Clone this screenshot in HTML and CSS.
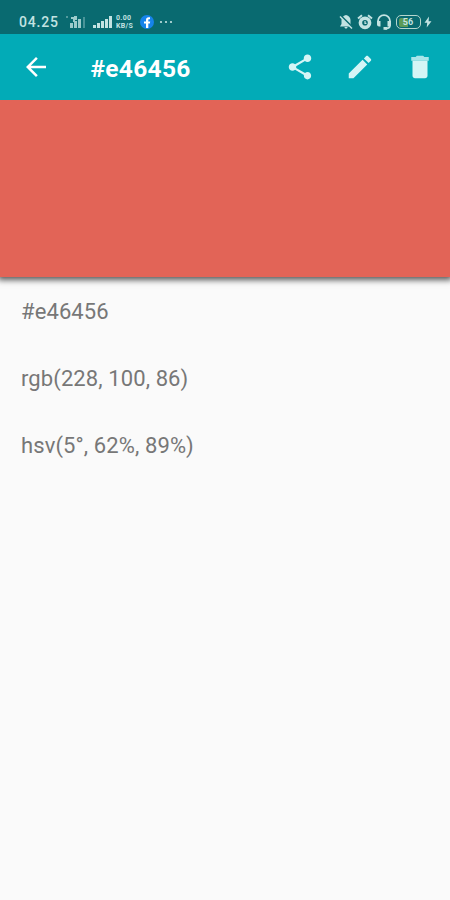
FILE: index.html
```html
<!DOCTYPE html>
<html lang="en">
<head>
    <meta charset="UTF-8">
    <meta name="viewport" content="width=device-width, initial-scale=1.0">
    <title>#e46456</title>
    <link rel="stylesheet" href="styles.css">
</head>
<body>
    <div class="status-bar">
        <span class="clock">04.25</span>
        <svg class="sim" width="20" height="14" viewBox="0 0 20 14">
            <path d="M0 1h2v2H0z" opacity=".4"/>
            <path d="M5 2h3V1h3v4H9v2H7V4H5zM4 8h3v5H4zM8 6h3v7H8zM12 4h3v9h-3z" opacity=".8"/>
            <path d="M17 2h2v11h-2z" opacity=".35"/>
        </svg>
        <svg class="signal" width="20" height="14" viewBox="0 0 20 14">
            <path d="M0 10h3v3H0zM4 8h3v5H4zM8 6h3v7H8zM12 4h3v9h-3zM16 1h3v12h-3z"/>
        </svg>
        <div class="speed"><span>0.00</span><span>KB/S</span></div>
        <svg class="facebook" width="14" height="14" viewBox="0 0 14 14">
            <circle cx="7" cy="7" r="7" fill="#1683ea"/>
            <path d="M6 13V8.600H4V6.400h2V5c0-1.800 1-2.800 2.700-2.800h1.300v2H9c-.6 0-.7.3-.7.900v1.300h1.900l-.3 2.200H8.300V13z" fill="#fff"/>
        </svg>
        <svg class="more" width="14" height="4" viewBox="0 0 14 4">
            <circle cx="2" cy="2" r="1.100"/><circle cx="7" cy="2" r="1.100"/><circle cx="12" cy="2" r="1.100"/>
        </svg>

        <div class="status-right">
            <svg width="14" height="16" viewBox="0 0 14 16">
                <path d="M7 1C4 1.600 2.500 4 2.500 6v4L1 12.500h12L11.500 10V6c0-2-1.500-4.400-4.500-5zM5.500 13h3c0 2-3 2-3 0z"/>
                <path d="M1.500 1.500l12 12" fill="none" stroke="#096a70" stroke-width="2"/>
                <path d="M1 2.500l12 12" fill="none" stroke="#c3e3e2" stroke-width="1.500"/>
            </svg>
            <svg width="16" height="16" viewBox="0 0 16 16">
                <circle cx="8" cy="8.800" r="4.600" fill="none" stroke="#c3e3e2" stroke-width="3.600"/>
                <path d="M1 4.500l4-3.300M15 4.500l-4-3.300" fill="none" stroke="#c3e3e2" stroke-width="2"/>
                <path d="M8 7v2.300h1.500" fill="none" stroke="#c3e3e2" stroke-width="1.200"/>
            </svg>
            <svg width="16" height="16" viewBox="0 0 16 16">
                <path d="M2 9V7a6 5.800 0 0 1 12 0v4.500c0 2-2 3-5 3" fill="none" stroke="#c3e3e2" stroke-width="1.800"/>
                <path d="M1 7h3.500v5.500H3c-1 0-2-.8-2-2zM11.500 7H15v3.500c0 1.200-1 2-2 2h-1.500zM7.500 13h3.500v2.800H7.500z"/>
            </svg>
            <div class="battery"><span>56</span></div>
            <svg width="8" height="12" viewBox="0 0 8 12">
                <path d="M5 0.500L0.500 6.800h2.700L2.700 11.500 7.500 5.200H4.600z"/>
            </svg>
        </div>
    </div>

    <header class="toolbar">
        <svg class="icon back" viewBox="0 0 24 24">
            <path d="M20 11H7.830l5.590-5.590L12 4l-8 8 8 8 1.410-1.410L7.830 13H20v-2z"/>
        </svg>
        <h1>#e46456</h1>
        <div class="actions">
            <svg class="icon" viewBox="0 0 24 24">
                <path d="M18 16.080c-.76 0-1.440.3-1.960.77L8.910 12.700c.05-.23.09-.46.09-.7s-.04-.47-.09-.7l7.050-4.110c.54.5 1.250.81 2.040.81 1.660 0 3-1.340 3-3s-1.340-3-3-3-3 1.340-3 3c0 .24.04.47.09.7L8.040 9.810C7.500 9.310 6.790 9 6 9c-1.660 0-3 1.340-3 3s1.340 3 3 3c.79 0 1.500-.31 2.040-.81l7.120 4.160c-.05.21-.08.43-.08.65 0 1.610 1.310 2.920 2.920 2.920s2.920-1.310 2.920-2.920-1.310-2.920-2.920-2.920z"/>
            </svg>
            <svg class="icon" viewBox="0 0 24 24">
                <path d="M3 17.250V21h3.750L17.810 9.940l-3.750-3.750L3 17.250zM20.710 7.040c.39-.39.39-1.020 0-1.410l-2.340-2.340c-.39-.39-1.020-.39-1.410 0l-1.830 1.830 3.750 3.750 1.830-1.830z"/>
            </svg>
            <svg class="icon" viewBox="0 0 24 24">
                <path d="M6 19c0 1.100.9 2 2 2h8c1.100 0 2-.9 2-2V7H6v12z"/>
                <path d="M5 4h3.500l1-1h5l1 1H19v3H5z" opacity=".8"/>
            </svg>
        </div>
    </header>

    <div class="swatch"></div>

    <div class="values">
        <p>#e46456</p>
        <p>rgb(228, 100, 86)</p>
        <p>hsv(5°, 62%, 89%)</p>
    </div>
</body>
</html>
```
FILE: styles.css
```css
body {
    font-family: Roboto, sans-serif;
    background: #fafafa;
    color: #777;
    margin: 0;
}

svg {
    display: block;
    flex: none;
}

/* Status bar */
.status-bar {
    display: flex;
    align-items: center;
    box-sizing: border-box;
    height: 34px;
    padding: 10px 18px 0 19px;
    background: #096a70;
    color: #c3e3e2;
    fill: #c3e3e2;
}

.clock {
    width: 50px;
    font-size: 14px;
    font-weight: 500;
    letter-spacing: 0.8px;
}

.sim { margin-left: -3px; }
.signal { margin-left: 7px; }

.speed {
    display: flex;
    flex-direction: column;
    width: 18px;
    margin-left: 3px;
    font-size: 7px;
    font-weight: 700;
    line-height: 8px;
    letter-spacing: 0.3px;
}

.facebook { margin-left: 6px; }
.more { margin-left: 5px; }

.status-right {
    display: flex;
    align-items: center;
    gap: 3.5px;
    margin-left: auto;
}

.battery {
    box-sizing: border-box;
    width: 25px;
    height: 14px;
    border: 1.5px solid #b5d6cd;
    border-radius: 5px;
    padding: 1.5px 2px;
    font-size: 9px;
    font-weight: 700;
    line-height: 9px;
    text-align: center;
}

.battery span {
    display: block;
    border-radius: 2px;
    background: linear-gradient(to right, #5d9a57 50%, #096a70 50%);
}

/* Toolbar */
.toolbar {
    display: flex;
    align-items: center;
    box-sizing: border-box;
    height: 66px;
    padding: 0 15px 0 20.5px;
    background: #02abb7;
    color: #fff;
}

.icon {
    width: 30px;
    height: 30px;
    fill: #d5f5f6;
}

.icon.back { fill: #fff; }

.toolbar h1 {
    margin: 2px 0 0 40px;
    font-size: 24.5px;
    font-weight: 700;
    letter-spacing: 0.3px;
}

.actions {
    display: flex;
    gap: 30px;
    margin-left: auto;
}

/* Color preview */
.swatch {
    height: 177px;
    background: #e26457;
    box-shadow: 0 1px 6px 2px rgba(0, 0, 0, 0.65);
    clip-path: inset(0 0 -15px 0);
}

.values {
    padding: 21px 21px 0;
}

.values p {
    margin: 0 0 39px;
    font-size: 22px;
    line-height: 28px;
    letter-spacing: 0.1px;
}
```
